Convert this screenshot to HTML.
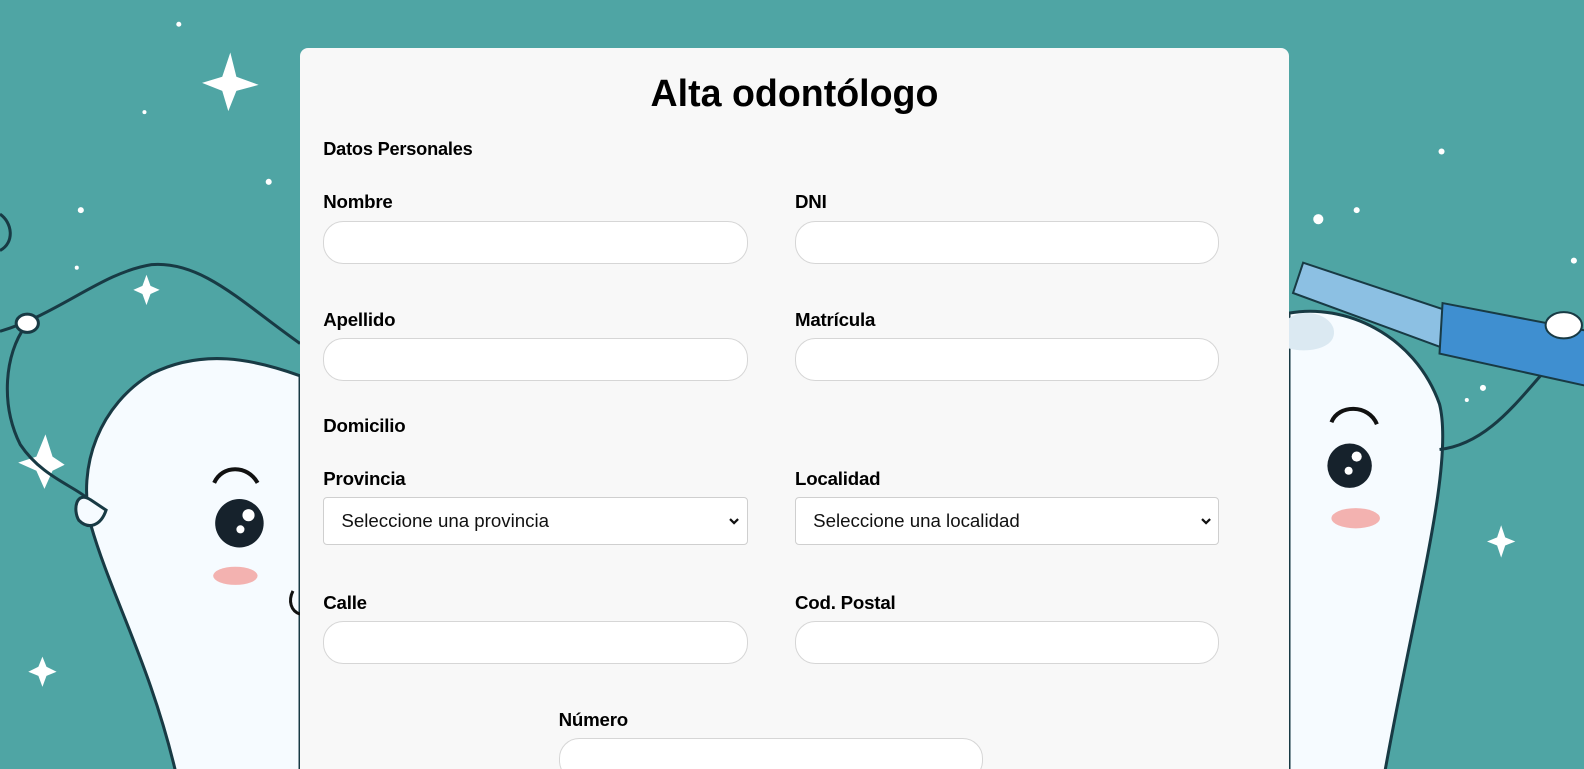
<!DOCTYPE html>
<html><head><meta charset="utf-8">
<style>
*{box-sizing:border-box;margin:0;padding:0}
html,body{width:1584px;height:769px;overflow:hidden}
body{background:#4fa5a4;font-family:"Liberation Sans",Arial,sans-serif}
#w{position:relative;width:1568px;height:762px;zoom:1.0102}
#bg{position:absolute;left:0;top:0}
.card{position:absolute;left:297px;top:48px;width:979px;height:740px;background:#f8f8f8;border-radius:8px}
.t{position:absolute;font-weight:bold;color:#000;white-space:nowrap}
h1.t{left:0;width:979px;text-align:center;top:23px;font-size:37.2px;line-height:42px}
.lbl{font-size:18.5px;line-height:20px;letter-spacing:-0.2px}
.sec{font-size:18px;line-height:20px;letter-spacing:-0.2px}
.in{position:absolute;width:420px;height:42px;background:#fff;border:1px solid #d6d6d6;border-radius:20px}
.sel{position:absolute;width:420px;height:48px;background:#fff;border:1px solid #cfcfcf;border-radius:4px;font-size:18.5px;color:#111;padding:12px 0 0 17px}
.sel svg{position:absolute;right:6px;top:18px}
</style></head><body><div id="w">
<svg id="bg" width="1568" height="762" viewBox="0 0 1568 762">
<g fill="#fff">
<path d="M228 52 L234 76 L256 84 L234 90 L226 110 L220 90 L200 82 L220 76Z"/>
<path d="M145 272 L149 283 L158 287 L149 291 L145 302 L141 291 L132 287 L141 283Z"/>
<path d="M45 430 L52 452 L64 460 L52 466 L44 484 L36 466 L18 458 L36 452Z"/>
<path d="M42 650 L46 660 L56 665 L46 669 L42 680 L38 669 L28 665 L38 660Z"/>
<path d="M1486 520 L1490 532 L1500 536 L1490 540 L1486 552 L1482 540 L1472 536 L1482 532Z"/>
<circle cx="177" cy="24" r="2.5"/><circle cx="143" cy="111" r="2"/><circle cx="266" cy="180" r="3"/>
<circle cx="80" cy="208" r="3"/><circle cx="76" cy="265" r="2"/><circle cx="1305" cy="217" r="5"/>
<circle cx="1343" cy="208" r="3"/><circle cx="1427" cy="150" r="3"/><circle cx="1558" cy="258" r="3"/>
<circle cx="1468" cy="384" r="3"/><circle cx="1452" cy="396" r="2"/>
</g>
<g fill="none" stroke="#183a44" stroke-width="3">
<path d="M0 328 C60 310 100 270 150 262 C200 258 240 300 297 340"/>
<path d="M25 323 C5 350 0 400 20 440 C40 470 70 480 85 492"/>
<path d="M0 212 C12 220 15 240 0 248"/>
</g>
<ellipse cx="27" cy="320" rx="11" ry="9" fill="#fff" stroke="#183a44" stroke-width="3"/>
<path d="M297 372 C250 355 200 345 150 370 C100 400 75 460 90 520 C110 590 150 660 175 769 L297 769Z" fill="#f6fbff" stroke="#183a44" stroke-width="3"/>
<path d="M90 495 C75 485 72 505 78 515 C88 525 100 520 105 505Z" fill="#f6fbff" stroke="#183a44" stroke-width="3"/>
<path d="M212 478 C220 460 245 460 255 478" fill="none" stroke="#111" stroke-width="4"/>
<circle cx="237" cy="518" r="24" fill="#16222c"/><circle cx="246" cy="510" r="6" fill="#fff"/><circle cx="238" cy="524" r="4" fill="#fff"/>
<ellipse cx="233" cy="570" rx="22" ry="9" fill="#f3b2b0"/>
<path d="M290 585 C285 595 288 605 297 608" fill="none" stroke="#111" stroke-width="3"/>
<path d="M1276 310 C1330 300 1400 330 1425 400 C1440 460 1400 600 1370 769 L1276 769Z" fill="#f6fbff" stroke="#183a44" stroke-width="3"/>
<path d="M1425 445 C1470 440 1500 400 1525 372" fill="none" stroke="#183a44" stroke-width="3"/>
<path d="M1290 260 L1440 310 L1430 345 L1280 290Z" fill="#8cc0e3" stroke="#183a44" stroke-width="2"/>
<path d="M1428 300 L1584 330 L1584 385 L1425 350Z" fill="#3f8fd0" stroke="#183a44" stroke-width="2"/>
<ellipse cx="1548" cy="322" rx="18" ry="13" fill="#fff" stroke="#183a44" stroke-width="2"/>
<path d="M1276 315 C1290 305 1315 310 1320 325 C1325 345 1295 350 1276 345Z" fill="#dbe9f2"/>
<path d="M1318 418 C1325 400 1355 400 1363 420" fill="none" stroke="#111" stroke-width="4"/>
<circle cx="1336" cy="461" r="22" fill="#16222c"/><circle cx="1343" cy="452" r="5" fill="#fff"/><circle cx="1335" cy="466" r="4" fill="#fff"/>
<ellipse cx="1342" cy="513" rx="24" ry="10" fill="#f3b2b0"/>
</svg>
<div class="card">
<h1 class="t">Alta odontólogo</h1>
<div class="t sec" style="left:23px;top:90px">Datos Personales</div>
<div class="t lbl" style="left:23px;top:142px">Nombre</div>
<div class="t lbl" style="left:490px;top:142px">DNI</div>
<div class="in" style="left:23px;top:171px"></div>
<div class="in" style="left:490px;top:171px"></div>
<div class="t lbl" style="left:23px;top:259px">Apellido</div>
<div class="t lbl" style="left:490px;top:259px">Matrícula</div>
<div class="in" style="left:23px;top:287px"></div>
<div class="in" style="left:490px;top:287px"></div>
<div class="t lbl" style="left:23px;top:364px">Domicilio</div>
<div class="t lbl" style="left:23px;top:416px">Provincia</div>
<div class="t lbl" style="left:490px;top:416px">Localidad</div>
<div class="sel" style="left:23px;top:444px">Seleccione una provincia<svg width="12" height="10" viewBox="0 0 12 10"><path d="M2 3 L6 7 L10 3" fill="none" stroke="#111" stroke-width="2.2"/></svg></div>
<div class="sel" style="left:490px;top:444px">Seleccione una localidad<svg width="12" height="10" viewBox="0 0 12 10"><path d="M2 3 L6 7 L10 3" fill="none" stroke="#111" stroke-width="2.2"/></svg></div>
<div class="t lbl" style="left:23px;top:539px">Calle</div>
<div class="t lbl" style="left:490px;top:539px">Cod. Postal</div>
<div class="in" style="left:23px;top:567px"></div>
<div class="in" style="left:490px;top:567px"></div>
<div class="t lbl" style="left:256px;top:655px">Número</div>
<div class="in" style="left:256px;top:683px"></div>
</div>
</div></body></html>
